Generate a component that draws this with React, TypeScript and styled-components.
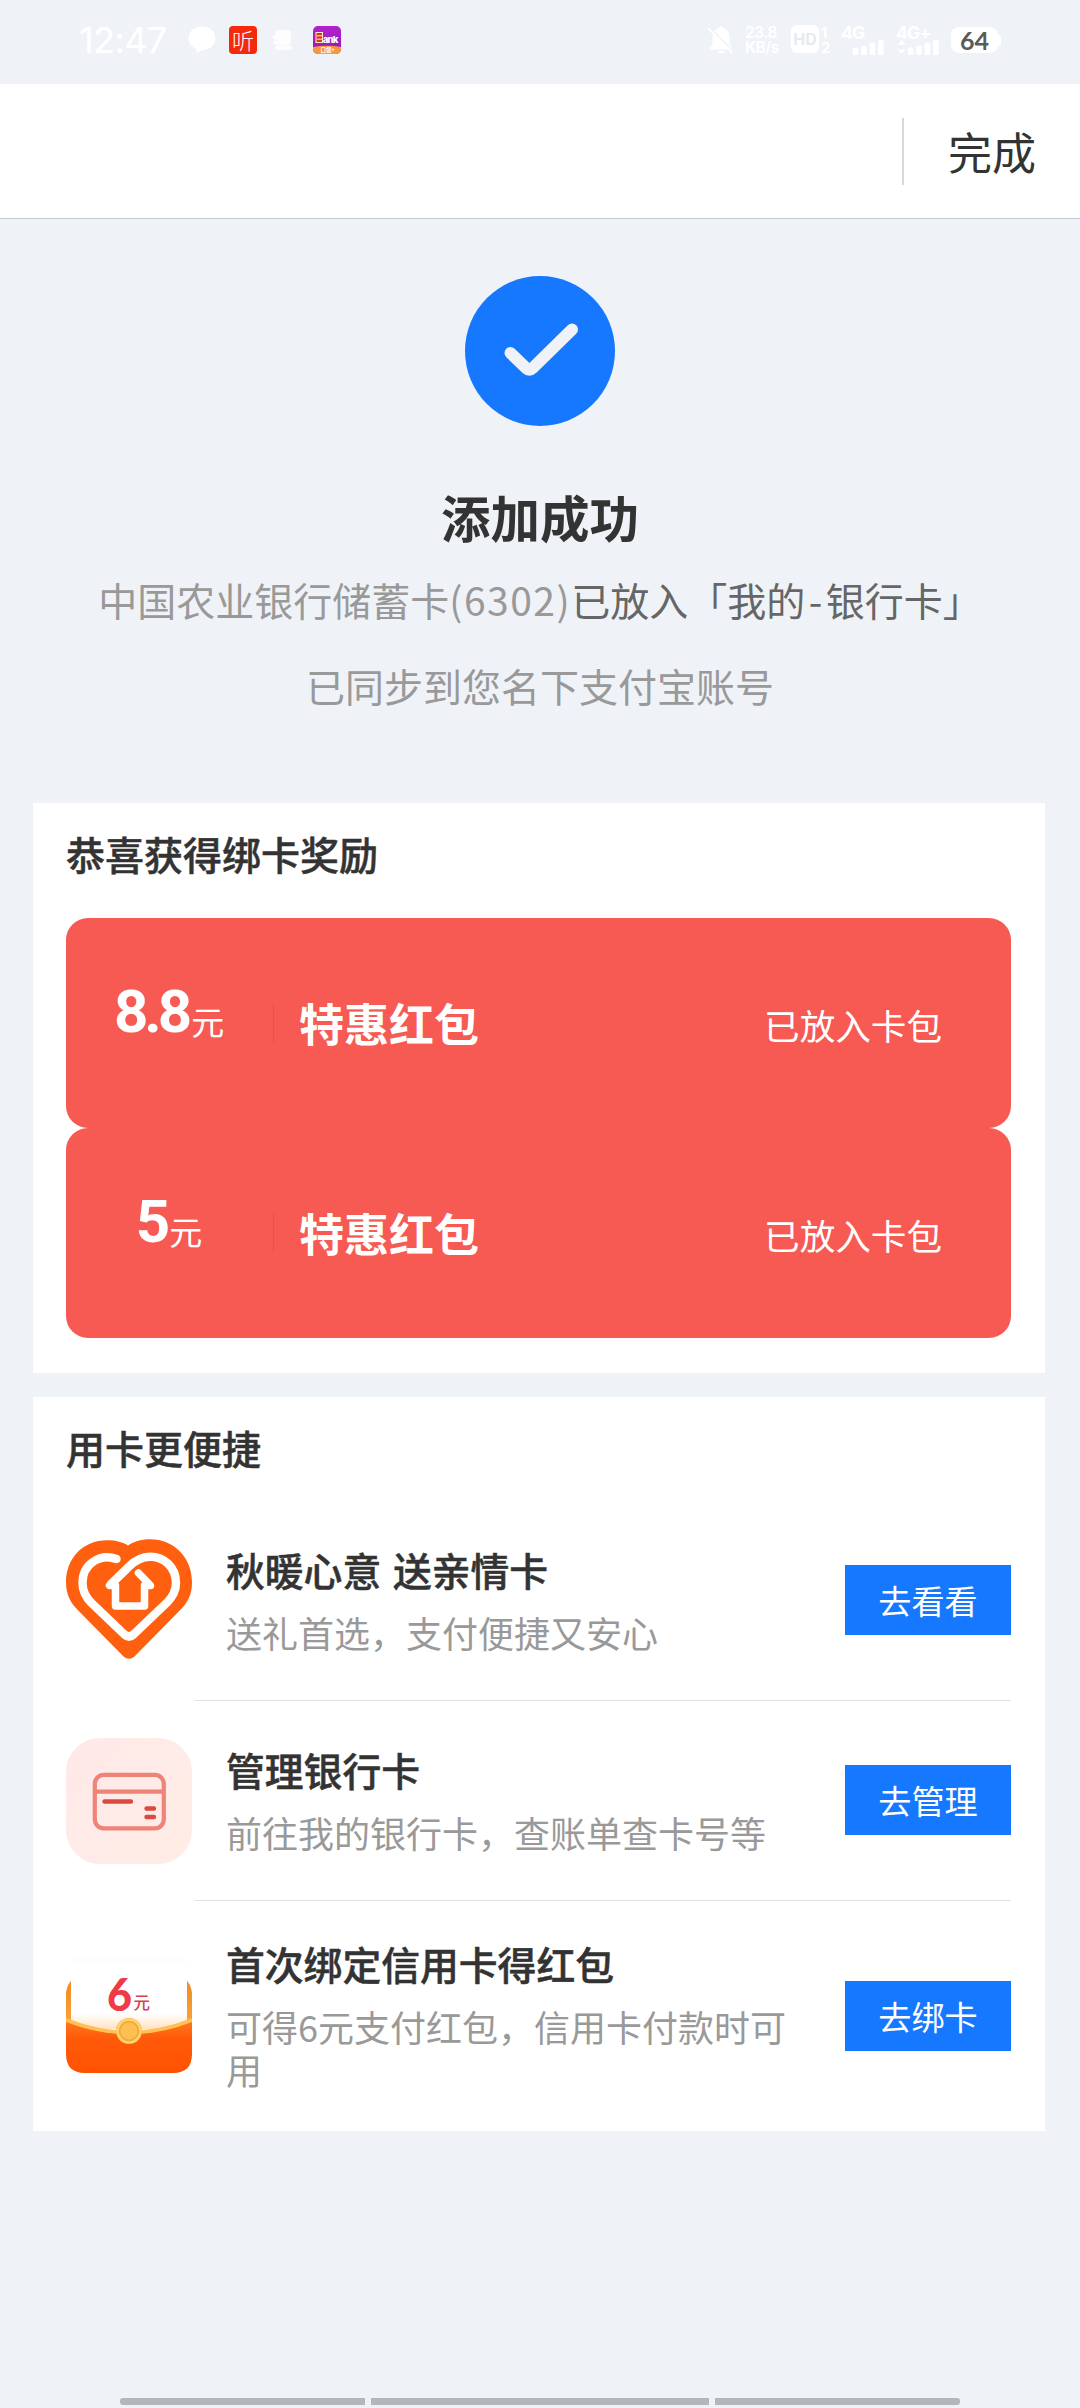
import React from "react";
import styled, { createGlobalStyle } from "styled-components";

const GlobalStyle = createGlobalStyle`
  * { box-sizing: border-box; }
  html, body { margin: 0; padding: 0; background: #eff3f8; }
  body { font-family: "Noto Sans CJK SC", "Noto Sans", sans-serif; color: #333; }
`;

const Screen = styled.div`
  width: 1080px;
  height: 2408px;
  display: flex;
  flex-direction: column;
  background: #eff3f8;
  overflow: hidden;
`;

/* ---------- status bar ---------- */

const StatusBar = styled.div`
  height: 84px;
  padding: 4px 79px 8px 79px;
  display: flex;
  align-items: center;
  justify-content: space-between;
  color: #fff;
  flex: none;
`;

const StatusGroup = styled.div<{ $gap: number }>`
  display: flex;
  align-items: center;
  gap: ${(p) => p.$gap}px;
`;

const NotificationSlot = styled.span<{ $before: number }>`
  display: flex;
  margin-left: ${(p) => p.$before}px;
`;

const Clock = styled.span`
  width: 96px;
  font: 400 36px/40px "Inter", sans-serif;
  letter-spacing: -0.6px;
`;

const AppTile = styled.span`
  width: 28px;
  height: 28px;
  border-radius: 4px;
  background: #f52a0c;
  color: #fff;
  font-size: 22px;
  font-weight: 300;
  line-height: 27px;
  text-align: center;
`;

const NetSpeed = styled.span`
  display: flex;
  flex-direction: column;
  width: 36px;
  font: 600 15.5px/15px "Inter", sans-serif;
  letter-spacing: -0.4px;
`;

const HdGroup = styled.span`
  display: flex;
  gap: 2px;
`;

const HdTile = styled.span`
  width: 28px;
  height: 28px;
  border-radius: 6px;
  background: #fff;
  color: #e6eaf0;
  font: 700 16px/29px "Inter", sans-serif;
  text-align: center;
`;

const SimNumbers = styled.span`
  display: flex;
  flex-direction: column;
  width: 10px;
  font: 700 15px/15px "Inter", sans-serif;
`;

const Signal = styled.span<{ $width: number }>`
  display: flex;
  flex-direction: column;
  width: ${(p) => p.$width}px;
  height: 29px;
  font: 700 17.5px/14px "Inter", sans-serif;
  letter-spacing: -0.9px;
`;

const Battery = styled.span`
  display: flex;
  align-items: center;
`;

const BatteryBody = styled.span`
  width: 47px;
  height: 26px;
  border-radius: 8px;
  background: #fff;
  color: #5a5a5a;
  font: 700 25px/27px "Lato", sans-serif;
  text-align: center;
`;

const BatteryTip = styled.span`
  width: 3px;
  height: 11px;
  border-radius: 0 4px 4px 0;
  background: #fff;
`;

/* ---------- header ---------- */

const Header = styled.header`
  height: 135px;
  display: flex;
  align-items: center;
  justify-content: flex-end;
  background: #fff;
  border-bottom: 1px solid #c3cbd2;
  flex: none;
`;

const HeaderDivider = styled.span`
  width: 2px;
  height: 67px;
  background: #d8d8d8;
`;

const DoneButton = styled.button`
  border: 0;
  padding: 0 43px 0 43px;
  background: none;
  font: 400 44px/60px "Noto Sans CJK SC", sans-serif;
  color: #333;
  width: 176px;
  white-space: nowrap;
`;

/* ---------- result ---------- */

const Result = styled.section`
  height: 584px;
  padding-top: 57px;
  display: flex;
  flex-direction: column;
  align-items: center;
  flex: none;
`;

const ResultTitle = styled.h1`
  margin: 56px 0 0;
  font-size: 49.5px;
  font-weight: 700;
  line-height: 70px;
`;

const ResultText = styled.p<{ $top: number }>`
  margin: ${(p) => p.$top}px 0 0;
  font-size: 39px;
  line-height: 56px;
  color: #999;
  white-space: nowrap;
`;

const Strong = styled.span`
  color: #666;
`;

const Hyphen = styled.span`
  margin: 0 3.500px;
`;

const CardNumber = styled.span`
  letter-spacing: 1.5px;
`;

/* ---------- cards ---------- */

const Card = styled.section<{ $height: number }>`
  width: 1012px;
  height: ${(p) => p.$height}px;
  margin: 0 0 24px 33px;
  padding: 22px 34px 0 33px;
  background: #fff;
  flex: none;
`;

const CardTitle = styled.h2`
  margin: 0;
  font-size: 39px;
  font-weight: 500;
  line-height: 56px;
  -webkit-text-stroke: 0.5px #333;
`;

const CouponList = styled.div`
  margin-top: 37px;
`;

const Coupon = styled.div`
  height: 210px;
  border-radius: 22px;
  background: #f75a53;
  color: #fff;
  display: flex;
  align-items: center;
  padding-right: 69px;
`;

const Amount = styled.div`
  width: 207px;
  height: 70px;
  display: flex;
  align-items: baseline;
  justify-content: center;
  margin-top: -17px;
  padding-right: 1px;
`;

const AmountValue = styled.span`
  font: 700 60px/70px "Roboto", sans-serif;
  letter-spacing: -4px;
  transform: translateY(-3px);
`;

const AmountUnit = styled.span`
  font-size: 33px;
  line-height: 40px;
  margin-left: 3px;
`;

const CouponDivider = styled.span`
  width: 1px;
  height: 40px;
  background: #ea4f4a;
`;

const CouponName = styled.span`
  margin-left: 25px;
  flex: 1;
  font-size: 45px;
  font-weight: 700;
  line-height: 60px;
  margin-top: -1px;
`;

const CouponState = styled.span`
  font-size: 35.6px;
  line-height: 50px;
  margin-top: 3px;
`;

const ServiceList = styled.div`
  margin-top: 25px;
`;

const Row = styled.div<{ $height: number }>`
  height: ${(p) => p.$height}px;
  display: flex;
`;

const RowIcon = styled.div`
  width: 126px;
  height: 100%;
  display: flex;
  align-items: center;
  flex: none;
`;

const RowMain = styled.div<{ $last?: boolean }>`
  flex: 1;
  margin-left: 2px;
  padding-left: 32px;
  display: flex;
  align-items: center;
  justify-content: space-between;
  border-bottom: ${(p) => (p.$last ? "0" : "1px solid #e3e3e3")};
`;

const RowText = styled.div`
  width: 570px;
  padding-bottom: 5px;
`;

const RowTitle = styled.h3`
  margin: 0;
  font-size: 38.8px;
  font-weight: 500;
  line-height: 56px;
  word-spacing: 3px;
  -webkit-text-stroke: 0.5px #333;
`;

const RowDesc = styled.p`
  margin: 14px 0 0;
  font-size: 36px;
  line-height: 43px;
  color: #999;
`;

const ActionButton = styled.button`
  width: 166px;
  height: 70px;
  border: 0;
  padding: 0;
  background: #1677ff;
  color: #fff;
  font: 400 33.2px/70px "Noto Sans CJK SC", sans-serif;
  flex: none;
`;

/* ---------- bottom navigation hints ---------- */

const NavHints = styled.div`
  margin-top: auto;
  padding: 0 120px 3px;
  display: flex;
  gap: 6px;
`;

const NavHint = styled.span<{ $grow: number; $radius: string }>`
  flex: ${(p) => p.$grow} 0 0;
  height: 7px;
  border-radius: ${(p) => p.$radius};
  background: #b3b7bc;
`;

/* ---------- drawings ---------- */

const BubbleIcon = () => (
  <svg width="28" height="28" viewBox="0 0 28 28">
    <path d="M14 0.5c7.5 0 13.5 5 13.5 11.7S21.500 24 14 24l-5 3.500-.6-4.500C3.800 21.200.5 17.200.5 12.200.5 5.500 6.500.5 14 .5z" fill="#fff" />
  </svg>
);

const StackIcon = () => (
  <svg width="20" height="22" viewBox="0 0 20 22" fill="#fff" opacity="0.9">
    <rect x="2" y="1" width="16" height="5.500" rx="2.500" />
    <rect x="0" y="6" width="14" height="4.500" rx="2" />
    <rect x="4" y="5" width="14" height="11" rx="3" />
    <rect x="0" y="11.500" width="14" height="4" rx="2" />
    <rect x="2" y="16.500" width="17" height="4.500" rx="2" />
  </svg>
);

const BankIcon = () => (
  <svg width="28" height="28" viewBox="0 0 28 28">
    <defs>
      <linearGradient id="bankPurple" x1="0" y1="0" x2="0" y2="1">
        <stop offset="0" stopColor="#b41fd0" />
        <stop offset="1" stopColor="#8a1fb5" />
      </linearGradient>
      <clipPath id="bankClip"><rect width="28" height="28" rx="5" /></clipPath>
    </defs>
    <g clipPath="url(#bankClip)">
      <rect width="28" height="28" fill="url(#bankPurple)" />
      <path d="M0 21Q14 18.500 28 21v7H0z" fill="#f7973c" />
      <rect x="3" y="6.500" width="6.500" height="10" fill="#e0331f" stroke="#ffe9c9" strokeWidth="1" />
      <path d="M4 9.800h5M4 13.200h5" stroke="#ffe9c9" />
      <text x="9.800" y="16.500" fontFamily="Inter" fontWeight="800" fontSize="9.500" letterSpacing="-0.8" fill="#fff">ank</text>
      <text x="7.500" y="26.300" fontFamily="Noto Sans CJK SC" fontWeight="700" fontSize="5.500" fill="#fff">口袋+</text>
    </g>
  </svg>
);

const BellOffIcon = () => (
  <svg width="28" height="30" viewBox="0 0 28 30">
    <path d="M14 1.500c1.500 0 2.300.8 2.500 1.800 4 1.200 6 4.500 6 8.700v7l2.500 4v1.500H3V23l2.500-4v-7c0-4.200 2-7.500 6-8.700.2-1 1-1.800 2.500-1.800zM10.500 26h7c-.5 1.700-1.800 2.500-3.500 2.500s-3-.8-3.500-2.500z" fill="#fff" />
    <path d="M3 2.500 27 27" stroke="#eff3f8" strokeWidth="1.600" />
    <path d="M1.500 3.500 25.500 28" stroke="#fff" strokeWidth="1.800" />
  </svg>
);

const SignalBars = ({ arrows }: { arrows?: boolean }) => (
  <svg width="45" height="16" viewBox="0 0 45 16" fill="#fff">
    {arrows && <path d="M0 5 4.500 0 9 5zM0 10h9l-4.500 5z" />}
    <rect x="11" y="8" width="6" height="8" rx="2" />
    <rect x="20" y="6" width="6" height="10" rx="2" />
    <rect x="29" y="3" width="6" height="13" rx="2" />
    <rect x="38" y="0" width="6" height="16" rx="2" />
  </svg>
);

const SuccessIcon = () => (
  <svg width="150" height="150" viewBox="0 0 150 150">
    <circle cx="75" cy="75" r="75" fill="#1677ff" />
    <path d="M45.500 77 61.300 92.300Q64.500 95.200 67.500 92.300L107 53.500" fill="none" stroke="#eff3f8" strokeWidth="12" strokeLinecap="round" strokeLinejoin="round" />
  </svg>
);

const HeartHomeIcon = () => (
  <svg width="126" height="126" viewBox="0 0 126 126">
    <path d="M62 8.500C67 5 75 2.300 84 2.300c24 0 42 18 42 43 0 12-4 20-12 28L68.500 119.500Q63 124 57.500 119.500L12 73.300C4 65.300 0 57 0 45.300 0 21.300 17 3.300 41 3.300c9 0 16 2 21 5.200z" fill="#ff6010" />
    <path d="M50.500 22C34 16 16.500 27 16.500 46c0 8 3 14 9 20l33 31.500q4.500 4 9 0l33.500-32c5-5 9-11.500 9-19.500 0-16-12-26.300-26-26.300-8 0-15 3.800-21 9.800L45 47" fill="none" stroke="#fff" strokeWidth="8.400" strokeLinecap="round" strokeLinejoin="round" />
    <path d="M60 33 43.500 48.500H49.500V69H78.500V48.500H84.500L72.500 36" fill="none" stroke="#fff" strokeWidth="7.500" strokeLinecap="round" strokeLinejoin="round" />
  </svg>
);

const BankCardIcon = () => (
  <svg width="126" height="126" viewBox="0 0 126 126">
    <defs>
      <linearGradient id="tilePink" x1="0" y1="0" x2="1" y2="1">
        <stop offset="0" stopColor="#fee9e9" />
        <stop offset="1" stopColor="#ffece4" />
      </linearGradient>
    </defs>
    <rect width="126" height="126" rx="34" fill="url(#tilePink)" />
    <rect x="28.800" y="36.800" width="69" height="53.500" rx="9" fill="none" stroke="#ee8378" strokeWidth="4.200" />
    <path d="M28.800 53.700h69" stroke="#ee8378" strokeWidth="4.200" />
    <path d="M38.500 63.500h26.500M80.500 70.500h7.500M80.500 79h7.500" stroke="#d94b40" strokeWidth="4.400" strokeLinecap="round" />
  </svg>
);

const EnvelopeIcon = () => (
  <svg width="126" height="126" viewBox="0 0 126 126">
    <defs>
      <linearGradient id="envBody" x1="0" y1="0" x2="0" y2="1">
        <stop offset="0" stopColor="#ff7a1c" />
        <stop offset="0.35" stopColor="#ff5a0a" />
        <stop offset="1" stopColor="#ff5200" />
      </linearGradient>
      <linearGradient id="envPaper" x1="0" y1="0" x2="0" y2="1">
        <stop offset="0" stopColor="#fcfcfc" />
        <stop offset="0.1" stopColor="#fff" />
        <stop offset="0.78" stopColor="#fff" />
        <stop offset="1" stopColor="#ffe3c4" />
      </linearGradient>
      <linearGradient id="envSides" x1="0" y1="0" x2="0" y2="1">
        <stop offset="0" stopColor="#f08a22" />
        <stop offset="1" stopColor="#fba53c" />
      </linearGradient>
    </defs>
    <path d="M0 40Q1 31 6 27V74H0zM126 40Q125 31 120 27V74h6z" fill="url(#envSides)" />
    <path d="M5 10Q5 6 9 6H117Q121 6 121 10V76H5z" fill="url(#envPaper)" />
    <path d="M0 67Q63 92 126 67V101Q126 120 107 120H19Q0 120 0 101z" fill="url(#envBody)" />
    <path d="M0 67Q63 92 126 67" fill="none" stroke="#ffc055" strokeWidth="3.500" />
    <circle cx="63" cy="78" r="13" fill="#f2a83a" />
    <circle cx="63" cy="78" r="11.500" fill="none" stroke="#ffd36e" strokeWidth="2.500" />
    <circle cx="63" cy="78" r="8.500" fill="#ffc052" />
    <text x="41" y="57.500" fontFamily="Lato" fontWeight="900" fontSize="46" textLength="25" lengthAdjust="spacingAndGlyphs" fill="#f03a48">6</text>
    <text x="67.500" y="55.500" fontFamily="Noto Sans CJK SC" fontWeight="500" fontSize="16.500" fill="#d9404c">元</text>
  </svg>
);

/* ---------- data ---------- */

const coupons = [
  { amount: "8.8", name: "特惠红包", state: "已放入卡包" },
  { amount: "5", name: "特惠红包", state: "已放入卡包" },
];

const services = [
  { icon: <HeartHomeIcon />, title: "秋暖心意 送亲情卡", desc: "送礼首选，支付便捷又安心", action: "去看看", height: 200.6 },
  { icon: <BankCardIcon />, title: "管理银行卡", desc: "前往我的银行卡，查账单查卡号等", action: "去管理", height: 200.4 },
  { icon: <EnvelopeIcon />, title: "首次绑定信用卡得红包", desc: "可得6元支付红包，信用卡付款时可用", action: "去绑卡", height: 230 },
];

export default function App() {
  return (
    <Screen>
      <GlobalStyle />
      <StatusBar>
        <StatusGroup $gap={13}>
          <Clock>12:47</Clock>
          <BubbleIcon />
          <AppTile>听</AppTile>
          <NotificationSlot $before={3}>
            <StackIcon />
          </NotificationSlot>
          <NotificationSlot $before={7}>
            <BankIcon />
          </NotificationSlot>
        </StatusGroup>
        <StatusGroup $gap={10}>
          <BellOffIcon />
          <NetSpeed>
            <span>23.8</span>
            <span>KB/s</span>
          </NetSpeed>
          <HdGroup>
            <HdTile>HD</HdTile>
            <SimNumbers>
              <span>1</span>
              <span>2</span>
            </SimNumbers>
          </HdGroup>
          <Signal $width={45}>
            4G
            <SignalBars />
          </Signal>
          <Signal $width={45}>
            4G+
            <SignalBars arrows />
          </Signal>
          <Battery>
            <BatteryBody>64</BatteryBody>
            <BatteryTip />
          </Battery>
        </StatusGroup>
      </StatusBar>

      <Header>
        <HeaderDivider />
        <DoneButton>完成</DoneButton>
      </Header>

      <Result>
        <SuccessIcon />
        <ResultTitle>添加成功</ResultTitle>
        <ResultText $top={19}>
          中国农业银行储蓄卡<CardNumber>(6302)</CardNumber>
          <Strong>
            已放入「我的<Hyphen>-</Hyphen>银行卡」
          </Strong>
        </ResultText>
        <ResultText $top={30}>已同步到您名下支付宝账号</ResultText>
      </Result>

      <Card $height={570}>
        <CardTitle>恭喜获得绑卡奖励</CardTitle>
        <CouponList>
          {coupons.map((c) => (
            <Coupon key={c.amount}>
              <Amount>
                <AmountValue>{c.amount}</AmountValue>
                <AmountUnit>元</AmountUnit>
              </Amount>
              <CouponDivider />
              <CouponName>{c.name}</CouponName>
              <CouponState>{c.state}</CouponState>
            </Coupon>
          ))}
        </CouponList>
      </Card>

      <Card $height={734}>
        <CardTitle>用卡更便捷</CardTitle>
        <ServiceList>
          {services.map((s, i) => (
            <Row key={s.title} $height={s.height}>
              <RowIcon>{s.icon}</RowIcon>
              <RowMain $last={i === services.length - 1}>
                <RowText>
                  <RowTitle>{s.title}</RowTitle>
                  <RowDesc>{s.desc}</RowDesc>
                </RowText>
                <ActionButton>{s.action}</ActionButton>
              </RowMain>
            </Row>
          ))}
        </ServiceList>
      </Card>

      <NavHints>
        <NavHint $grow={245} $radius="3px 0 0 3px" />
        <NavHint $grow={338} $radius="0" />
        <NavHint $grow={245} $radius="0 3px 3px 0" />
      </NavHints>
    </Screen>
  );
}
